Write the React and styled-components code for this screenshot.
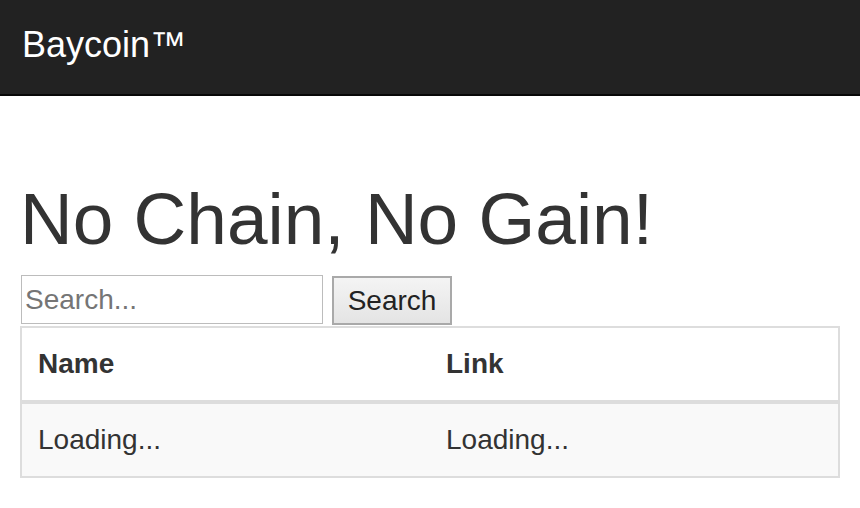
import React from "react";
import styled, { createGlobalStyle } from "styled-components";

const Global = createGlobalStyle`
  html, body { margin: 0; padding: 0; background: #fff; }
  body {
    font-family: "Liberation Sans", Arial, Helvetica, sans-serif;
    font-size: 28px;
    line-height: 1.42857;
    color: #333;
  }
  * { box-sizing: border-box; }
`;

const Navbar = styled.nav`
  height: 96px;
  background: #222;
  border-bottom: 2px solid #080808;
  display: flex;
  align-items: center;
  padding: 0 22px;
`;

const Brand = styled.a`
  color: #fff;
  font-size: 36px;
  line-height: 40px;
  text-decoration: none;
  margin-top: -4px;
`;

const Container = styled.main`
  padding: 0 20px;
`;

const Heading = styled.h1`
  margin: 83px 0 16px;
  font-size: 73px;
  font-weight: 500;
  line-height: 1.1;
  color: #333;
`;

const SearchRow = styled.form`
  display: flex;
  align-items: flex-start;
  gap: 9px;
  margin: 0 0 1px 1px;
`;

const SearchInput = styled.input`
  width: 302px;
  height: 49px;
  border: 1px solid #bcbcbc;
  padding: 0 3px;
  font-family: "Liberation Sans", Arial, sans-serif;
  font-size: 28px;
  color: #333;
  outline: none;
  &::placeholder { color: #757575; }
`;

const SearchButton = styled.button`
  width: 120px;
  height: 49px;
  margin-top: 1px;
  border: 2px solid #a9a9a9;
  background: linear-gradient(#f4f4f4, #e4e4e4);
  font-family: "Liberation Sans", Arial, sans-serif;
  font-size: 28px;
  color: #222;
  padding: 0;
`;

const Table = styled.table`
  width: 820px;
  border-collapse: collapse;
  border: 2px solid #ddd;
  table-layout: fixed;
`;

const Th = styled.th`
  text-align: left;
  font-weight: bold;
  padding: 16px;
  line-height: 40px;
  border-bottom: 4px solid #ddd;
`;

const Row = styled.tr`
  background: ${(p) => (p.$striped ? "#f9f9f9" : "#fff")};
`;

const Td = styled.td`
  padding: 16px;
  line-height: 40px;
`;

export default function App() {
  return (
    <>
      <Global />
      <Navbar>
        <Brand href="#">Baycoin™</Brand>
      </Navbar>
      <Container>
        <Heading>No Chain, No Gain!</Heading>
        <SearchRow onSubmit={(e) => e.preventDefault()}>
          <SearchInput placeholder="Search..." />
          <SearchButton type="submit">Search</SearchButton>
        </SearchRow>
        <Table>
          <thead>
            <tr>
              <Th>Name</Th>
              <Th>Link</Th>
            </tr>
          </thead>
          <tbody>
            <Row $striped>
              <Td>Loading...</Td>
              <Td>Loading...</Td>
            </Row>
          </tbody>
        </Table>
      </Container>
    </>
  );
}
